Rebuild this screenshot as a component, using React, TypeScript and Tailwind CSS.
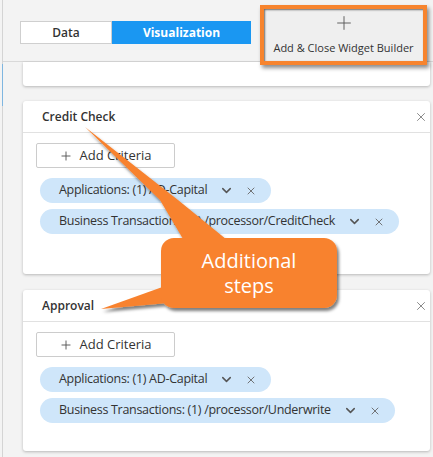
import React from 'react';
import { ChevronDown, X, Plus } from 'lucide-react';

type Chip = { label: string };

const Criteria: React.FC<{ chips: Chip[] }> = ({ chips }) => (
  <div className="pt-[10px] pl-[13px]">
    <button className="flex h-[25px] w-[139px] items-center justify-center gap-[6px] rounded-[2px] border border-[#cccccc] bg-white text-[13px] text-[#333]">
      <Plus size={14} strokeWidth={1.6} className="text-[#555]" />
      <span>Add Criteria</span>
    </button>
    <div className="mt-[10px] ml-[4px] flex flex-col items-start gap-[6px]">
      {chips.map((c) => (
        <div
          key={c.label}
          className="flex h-[25px] items-center rounded-full bg-[#cfe6fa] pl-[19px] pr-[14px] text-[12.5px] tracking-[-0.3px] text-[#333]"
        >
          <span>{c.label}</span>
          <ChevronDown size={15} strokeWidth={2.4} className="ml-[12px] text-[#555]" />
          <X size={12} strokeWidth={1.8} className="ml-[11px] text-[#666]" />
        </div>
      ))}
    </div>
  </div>
);

const Card: React.FC<{ title: string; chips: Chip[]; className?: string }> = ({ title, chips, className }) => (
  <div className={`rounded-[3px] bg-white shadow-[0_1px_3px_rgba(0,0,0,0.25)] ${className ?? ''}`}>
    <div className="flex h-[32px] items-center justify-between border-b border-[#e1e1e1] pl-[19px] pr-[2px]">
      <span className="text-[12px] font-semibold text-[#333]">{title}</span>
      <X size={14} strokeWidth={1.3} className="text-[#666]" />
    </div>
    <Criteria chips={chips} />
  </div>
);

export default function App() {
  return (
    <div className="relative h-[457px] w-[433px] overflow-hidden bg-[#f3f3f3] pl-[2px] font-['Open_Sans',sans-serif]">
      <div className="relative flex h-full flex-col border-l border-[#d4d4d4]">
        {/* left rail marker */}
        <div className="absolute left-[-1px] top-[64px] h-[42px] w-[1px] bg-[#7fb6e0]" />

        {/* top bar */}
        <div className="flex h-[62px] shrink-0 items-start border-b border-[#d9d9d9] pl-[17px]">
          <div className="mt-[21px] flex h-[23px]">
            <div className="flex w-[92px] items-center justify-center border border-[#cfcfcf] bg-white text-[12px] font-semibold text-[#333]">
              Data
            </div>
            <div className="flex w-[139px] items-center justify-center bg-[#1a97f2] text-[12px] font-bold text-white">
              Visualization
            </div>
          </div>
          <button className="relative z-10 ml-[9px] mt-[5px] flex h-[60px] w-[167px] flex-col items-center border-4 border-[#f7842e] bg-[#efefef] pt-[3px] shadow-[inset_1px_1px_2px_rgba(0,0,0,0.55),2px_3px_4px_rgba(0,0,0,0.45)]">
            <Plus size={22} strokeWidth={1} className="text-[#555]" />
            <span className="mt-[6px] text-[11px] text-[#333]">Add &amp; Close Widget Builder</span>
          </button>
        </div>

        {/* cards */}
        <div className="flex flex-col pl-[20px] pr-[3px]">
          <div className="h-[24px] rounded-b-[3px] bg-white shadow-[0_1px_3px_rgba(0,0,0,0.25)]" />
          <Card
            title="Credit Check"
            className="mt-[15px] pb-[40px]"
            chips={[
              { label: 'Applications: (1) AD-Capital' },
              { label: 'Business Transactions: (1) /processor/CreditCheck' },
            ]}
          />
          <Card
            title="Approval"
            className="mt-[16px] pb-[28px]"
            chips={[
              { label: 'Applications: (1) AD-Capital' },
              { label: 'Business Transactions: (1) /processor/Underwrite' },
            ]}
          />
        </div>
      </div>

      {/* callout annotation */}
      <svg className="pointer-events-none absolute left-0 top-0" width={433} height={457}>
        <defs>
          <filter id="cs" x="-20%" y="-20%" width="140%" height="140%">
            <feDropShadow dx="2" dy="3" stdDeviation="1.5" floodColor="#000" floodOpacity="0.5" />
          </filter>
        </defs>
        <g filter="url(#cs)" fill="#f8822e">
          <path d="M85,127 L178,200 L232,244 L186,244 L160,200 Z" />
          <path d="M101,309 L168,285 L168,303 Z" />
          <rect x={161} y={238} width={176} height={70} rx={13} />
        </g>
      </svg>
      <div className="pointer-events-none absolute left-[161px] top-[238px] flex h-[70px] w-[176px] flex-col items-center justify-center text-[20px] leading-[25px] text-white">
        <span>Additional</span>
        <span>steps</span>
      </div>
    </div>
  );
}
